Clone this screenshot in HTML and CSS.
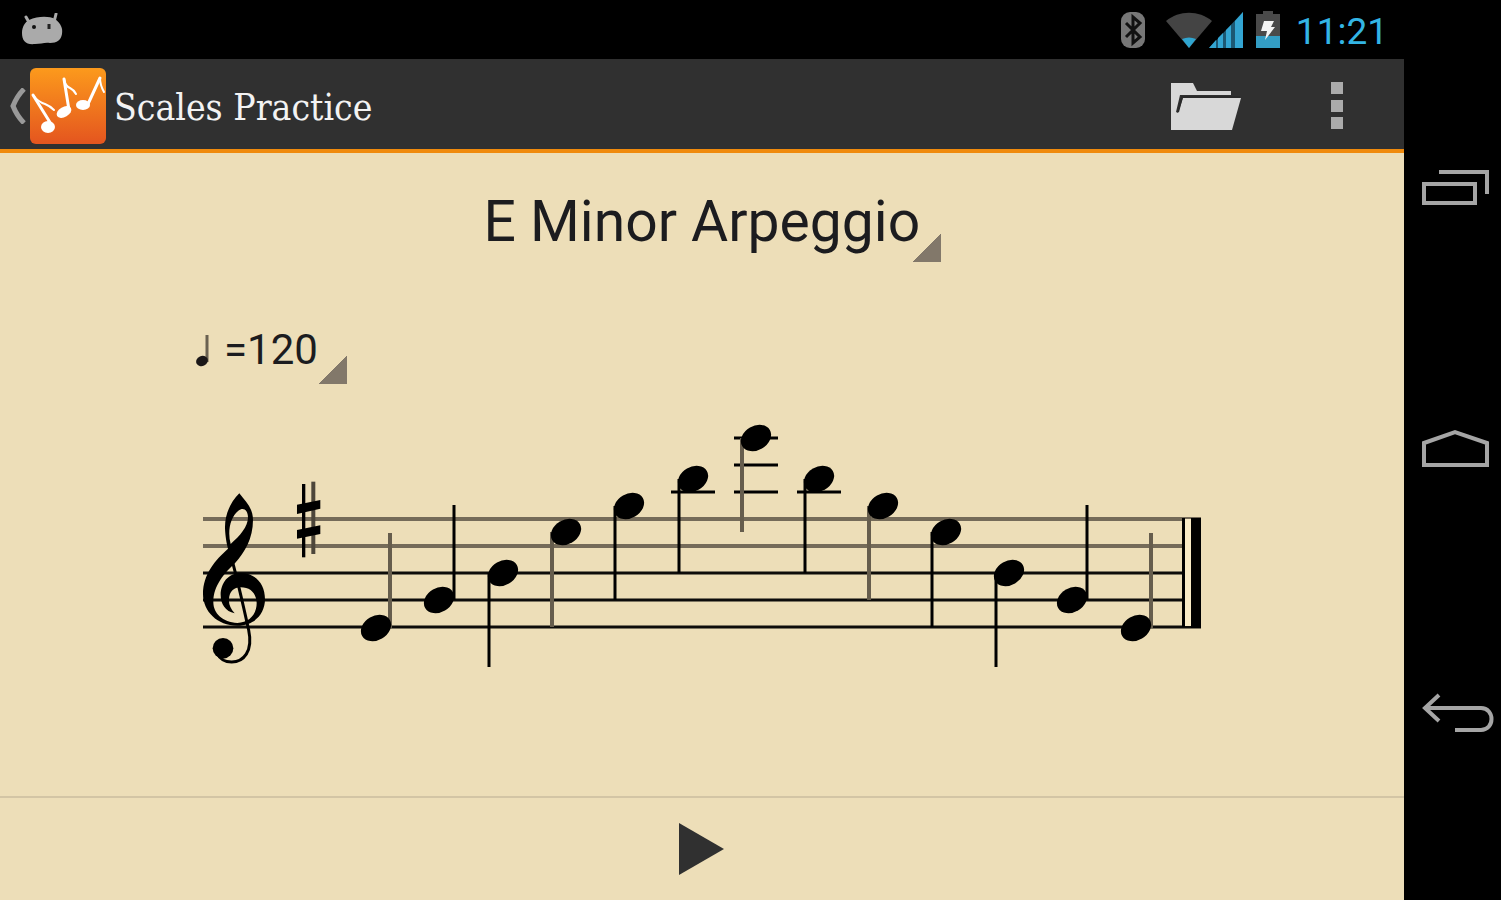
FILE: index.html
```
<!DOCTYPE html>
<html lang="en">
<head>
  <meta charset="UTF-8" />
  <meta name="viewport" content="width=device-width, initial-scale=1.0"/>
  <title>Scales Practice</title>
  <link rel="stylesheet" href="styles.css">
</head>
<body>

  <div class="screen">
    <div class="status-bar">
      <svg class="droid" width="44" height="34" viewBox="0 0 44 34" aria-hidden="true">
        <path d="M6 4l4 7M36 1l-2 8" stroke="#aaa" stroke-width="3" stroke-linecap="round"/>
        <path d="M9 7C18 3 29 3 35 6c6 5 8 9 7 15-1 6-5 9-12 9-5-1-9 1-15 1C6 32 2 28 2 20 2 14 5 9 9 7z" fill="#aaa"/>
        <circle cx="14" cy="14" r="2" fill="#111"/>
        <path d="M29 11v5" stroke="#222" stroke-width="3"/>
      </svg>
      <div class="indicators">
        <svg class="bluetooth" width="24" height="36" viewBox="0 0 24 36" aria-hidden="true">
          <rect width="24" height="36" rx="9" fill="#777"/>
          <path d="M5 11l14 14-7 6V5l7 6L5 25" fill="none" stroke="#111" stroke-width="3"/>
        </svg>
        <svg class="wifi" width="46" height="36" viewBox="0 0 46 36" aria-hidden="true">
          <path d="M0 9C13-2 33-2 46 9L23 36z" fill="#444"/>
          <path d="M16 27q7-3 14 0l-7 9z" fill="#2fa5d0"/>
        </svg>
        <svg class="signal" width="34" height="36" viewBox="0 0 34 36" aria-hidden="true">
          <path d="M0 36L34 0v36z" fill="#1c5873"/>
          <path d="M0 36l7-8v8zM9 26l5-5v15H9zM17 18l5-5v23h-5zM26 9l8-9v36h-8z" fill="#33a5d2"/>
        </svg>
        <svg class="battery" width="24" height="37" viewBox="0 0 24 37" aria-hidden="true">
          <path d="M0 3h7V0h10v3h7v34H0z" fill="#4a4a4a"/>
          <path d="M0 25h24v12H0z" fill="#339dc4"/>
          <path d="M8 10h10l-3 6h4L9 29l2-9H5z" fill="#f4f4f4"/>
        </svg>
        <span class="clock">11:21</span>
      </div>
    </div>

    <header class="action-bar">
      <button class="up" aria-label="Navigate up">
        <svg width="20" height="36" viewBox="0 0 20 36" aria-hidden="true">
          <path d="M16 1Q9 8 5 18q4 10 11 17" fill="none" stroke="#999" stroke-width="5"/>
        </svg>
        <svg class="app-icon" width="76" height="76" viewBox="0 0 76 76" aria-hidden="true">
          <defs>
            <linearGradient id="orange" x1="0" y1="0" x2="0" y2="1">
              <stop offset="0" stop-color="#fc9a1c"/>
              <stop offset="1" stop-color="#e4551f"/>
            </linearGradient>
          </defs>
          <rect width="76" height="76" rx="6" fill="url(#orange)"/>
          <g fill="#fff">
            <ellipse cx="18" cy="59" rx="7" ry="6"/>
            <ellipse cx="34" cy="44" rx="8" ry="5" transform="rotate(-30 34 44)"/>
            <ellipse cx="53" cy="37" rx="7" ry="5"/>
          </g>
          <g fill="none" stroke="#fff" stroke-width="2" stroke-linecap="round">
            <path d="M21 56L3 27M39 42L34 11M58 36L70 10" stroke-width="3"/>
            <path d="M3 27q5 7 12 9 5 2 9 6M34 11q1 7 6 9 4 2 6 6M70 10q0 7 4 14"/>
          </g>
        </svg>
      </button>
      <h1>Scales Practice</h1>
      <button class="folder" aria-label="Open">
        <svg width="72" height="50" viewBox="0 0 72 50" aria-hidden="true">
          <path d="M1 2h22l4 8h34v4H10L6 31l2 1 5-15h58L62 49H1z" fill="#d8d8d8"/>
          <path d="M8 31l4-15h58" fill="none" stroke="#2a2a2a" stroke-width="2"/>
        </svg>
      </button>
      <button class="overflow" aria-label="More options">
        <svg width="14" height="48" viewBox="0 0 14 48" aria-hidden="true">
          <path d="M1 0h12v12H1zM1 18h12v12H1zM1 35h12v12H1z" fill="#ababab"/>
        </svg>
      </button>
    </header>

    <main>
      <select class="spinner scale" aria-label="Scale">
        <option>E Minor Arpeggio</option>
      </select>

      <div class="tempo">
        <label for="tempo" aria-label="Tempo">
          <svg width="16" height="38" viewBox="0 0 16 38" aria-hidden="true">
            <path d="M11 1v27" stroke="#6a6151" stroke-width="3"/>
            <ellipse cx="6" cy="27" rx="6" ry="5" transform="rotate(-25 6 27)" fill="#1b1718"/>
          </svg>
        </label>
        <select class="spinner" id="tempo">
          <option>=120</option>
        </select>
      </div>

      <svg class="score" viewBox="196 415 1012 260" role="img" aria-label="E minor arpeggio, up and down">
        <defs>
          <ellipse id="head" rx="16" ry="12" transform="rotate(-30)"/>
        </defs>

        <!-- staff -->
        <path d="M203 519h998M203 546h998" stroke="#756b59" stroke-width="4"/>
        <path d="M203 573h998M203 600h998M203 627h998" stroke="#0d0c0a" stroke-width="3"/>

        <!-- treble clef and key signature -->
        <g transform="translate(190 470) scale(.3333)">
          <path fill-rule="evenodd" d="M148 70C120 98 104 135 105 175C106 200 110 222 114 236C76 270 39 312 39 372C39 424 82 467 142 467C195 467 225 430 225 388C225 340 195 309 152 309C114 309 92 340 92 375C92 402 106 424 134 430C122 416 116 404 117 388C118 364 132 352 152 352C180 352 198 368 200 398C201 432 178 459 142 459C98 457 70 430 70 396C70 346 104 308 136 278C164 248 189 205 189 150C189 115 170 98 148 70ZM122 222C112 185 120 142 145 122C160 110 174 120 174 142C174 170 150 198 122 222Z"/>
          <path d="M124 262C140 320 165 430 176 480C190 545 160 576 125 576C105 576 88 566 82 550" fill="none" stroke="#000" stroke-width="9"/>
          <circle cx="99" cy="535" r="31"/>
          <path d="M341 42v220" stroke="#000" stroke-width="10"/>
          <path d="M370 35v217" stroke="#4d463a" stroke-width="12"/>
          <path d="M321 104l70-14v26l-70 16zM321 180l70-14v26l-70 14z"/>
        </g>

        <!-- ledger lines -->
        <path d="M671 492h44M734 492h44M734 465h44M734 438h44M797 492h44" stroke="#000" stroke-width="3"/>

        <!-- stems -->
        <g fill="none" stroke-width="3">
          <path d="M454 505v95M489 573v94M615 506v94M679 479v94M805 479v94M932 532v95M996 573v94M1087 505v95" stroke="#000"/>
          <path d="M390 533v95M552 532v95M742 438v94M869 506v94M1151 533v95" stroke="#665d4d" stroke-width="4"/>
        </g>

        <!-- note heads -->
        <use href="#head" x="376" y="628"/>
        <use href="#head" x="439" y="600"/>
        <use href="#head" x="503" y="573"/>
        <use href="#head" x="566" y="532"/>
        <use href="#head" x="629" y="506"/>
        <use href="#head" x="693" y="479"/>
        <use href="#head" x="756" y="438"/>
        <use href="#head" x="819" y="479"/>
        <use href="#head" x="883" y="506"/>
        <use href="#head" x="946" y="532"/>
        <use href="#head" x="1009" y="573"/>
        <use href="#head" x="1072" y="600"/>
        <use href="#head" x="1136" y="628"/>

        <!-- final bar line -->
        <path d="M1185 519h6v107h-6z" fill="#f9ebc6"/>
        <path d="M1182 518h3v109h-3zM1191 518h10v110h-10z"/>
      </svg>
    </main>

    <footer class="player">
      <button class="play" aria-label="Play">
        <svg width="48" height="54" viewBox="0 0 48 54" aria-hidden="true">
          <path d="M1 1l45 26L1 53z" fill="#303030"/>
        </svg>
      </button>
    </footer>
  </div>

  <nav class="system-nav">
    <button aria-label="Recent apps">
      <svg width="74" height="42" viewBox="0 0 74 42" aria-hidden="true">
        <path d="M3 18h51v19H3zM18 6h48v22" fill="none" stroke="#a5a5a5" stroke-width="4"/>
      </svg>
    </button>
    <button aria-label="Home">
      <svg width="74" height="42" viewBox="0 0 74 42" aria-hidden="true">
        <path d="M3 14L34 3l32 11v22H3z" fill="none" stroke="#a5a5a5" stroke-width="4"/>
      </svg>
    </button>
    <button aria-label="Back">
      <svg width="74" height="42" viewBox="0 0 74 42" aria-hidden="true">
        <path d="M18 3L4 16l14 13M4 16h56c14 0 14 22 0 22H34" fill="none" stroke="#a5a5a5" stroke-width="4"/>
      </svg>
    </button>
  </nav>

</body>
</html>
```

FILE: styles.css
```
* {
  box-sizing: border-box;
}

body {
  display: flex;
  min-height: 100vh;
  margin: 0;
  background: #000;
  font-family: Roboto, sans-serif;
}

svg {
  display: block;
}

button {
  padding: 0;
  border: none;
  background: none;
}

.screen {
  display: flex;
  flex-direction: column;
  flex: 1;
  min-width: 0;
  background: #eddeb8;
}

/* status bar */
.status-bar {
  display: flex;
  justify-content: space-between;
  align-items: center;
  height: 59px;
  padding: 0 16px 0 20px;
  background: #000;
}

.indicators {
  display: flex;
  align-items: center;
}

.bluetooth {
  margin-right: 21px;
}

.signal {
  margin: 0 13px 0 -3px;
}

.clock {
  margin-left: 16px;
  padding-top: 4px;
  color: #33b5e5;
  font-size: 37px;
  line-height: 48px;
}

/* action bar */
.action-bar {
  display: flex;
  align-items: center;
  height: 94px;
  padding-right: 60px;
  border-bottom: 4px solid #f08a0c;
  background: #303030;
}

.up {
  display: flex;
  align-items: center;
  gap: 2px;
  padding: 4px 0 0 8px;
}

h1 {
  flex: 1;
  margin: 0 0 0 8px;
  padding-top: 6px;
  color: #f3f3f3;
  font-family: "DejaVu Serif Condensed", "DejaVu Serif", serif;
  font-size: 37px;
  font-weight: normal;
}

.folder {
  margin-right: 88px;
  padding-top: 4px;
}

.overflow {
  padding-top: 4px;
}

/* practice sheet */
main {
  display: flex;
  flex-direction: column;
  flex: 1;
  padding: 33px 196px 0;
}

.spinner {
  appearance: none;
  height: 62px;
  padding: 0 29px 8px 0;
  border: none;
  border-radius: 0;
  background: linear-gradient(135deg, transparent 50%, #82786a 51%) right bottom / 29px 29px no-repeat;
  color: #1c1c1f;
  font-family: Roboto, sans-serif;
  font-size: 42px;
}

.scale {
  align-self: center;
  height: 76px;
  padding: 0 20px 6px;
  font-size: 57px;
}

.tempo {
  display: flex;
  align-items: center;
  gap: 12px;
  margin-top: 60px;
}

.score {
  width: 100%;
  margin-top: 31px;
}

.player {
  display: flex;
  justify-content: center;
  align-items: center;
  height: 104px;
  border-top: 2px solid #d3c5a5;
}

/* system buttons */
.system-nav {
  display: flex;
  flex-direction: column;
  justify-content: space-between;
  width: 97px;
  padding: 166px 0;
}

.system-nav button {
  padding-left: 17px;
}
```
